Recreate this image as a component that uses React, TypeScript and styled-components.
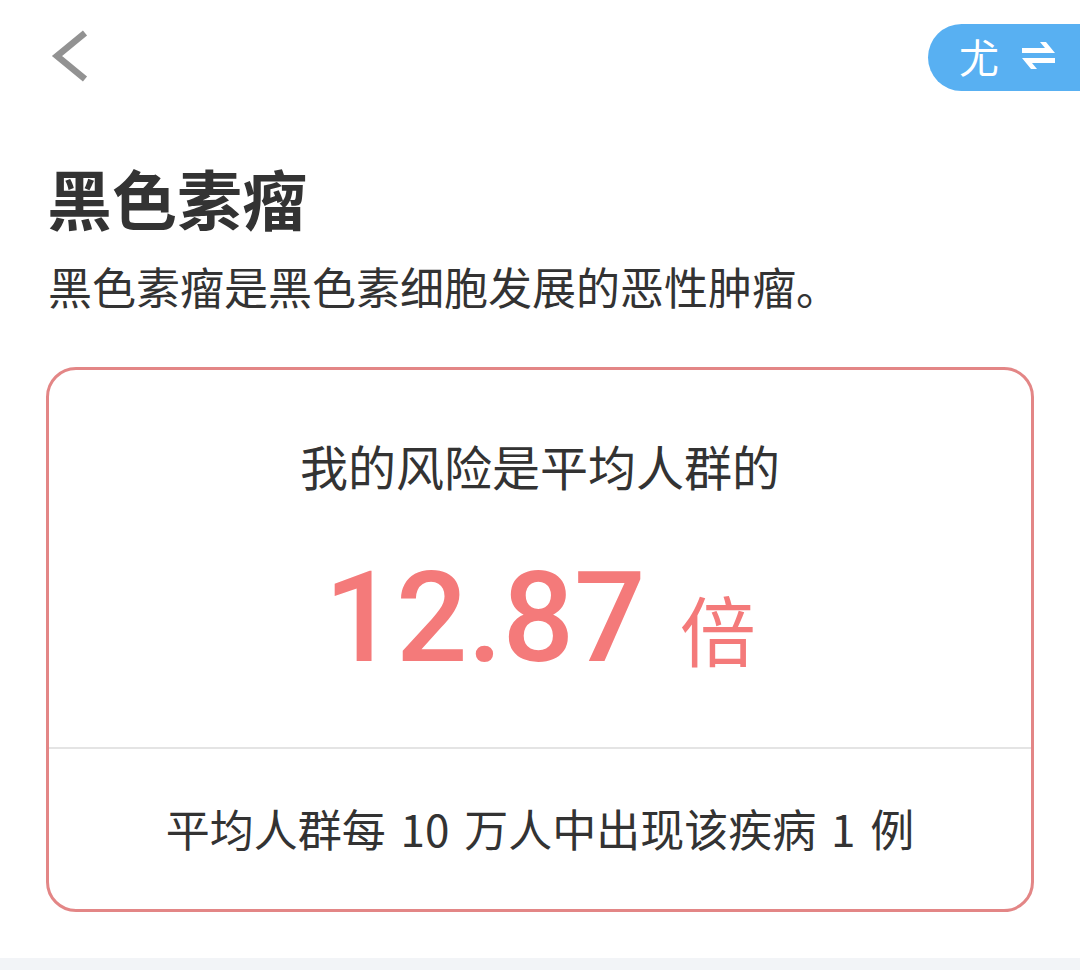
import React from "react";
import styled, { createGlobalStyle } from "styled-components";

const GlobalStyle = createGlobalStyle`
  html, body {
    margin: 0;
    padding: 0;
    background: #ffffff;
  }
  body {
    font-family: "Noto Sans CJK SC", "Noto Sans", sans-serif;
    color: #333333;
  }
  * { box-sizing: border-box; }
`;

const Page = styled.div`
  width: 1080px;
  height: 970px;
  display: flex;
  flex-direction: column;
  background: #ffffff;
  overflow: hidden;
`;

const TopBar = styled.div`
  height: 165px;
  display: flex;
  justify-content: space-between;
  align-items: flex-start;
`;

const BackButton = styled.button`
  margin: 28px 0 0 50px;
  padding: 0;
  border: none;
  background: transparent;
  width: 40px;
  height: 56px;
  display: flex;
  cursor: pointer;
`;

const SwitchPill = styled.div`
  margin-top: 24px;
  width: 152px;
  height: 67px;
  border-radius: 34px 0 0 34px;
  background: #58b0f2;
  display: flex;
  align-items: center;
  padding-left: 31px;
  gap: 21px;
`;

const PillText = styled.span`
  font-family: "Noto Sans CJK SC", sans-serif;
  font-size: 40px;
  line-height: 1;
  color: #ffffff;
  padding-bottom: 4px;
`;

const Title = styled.h1`
  margin: 0 0 34px 47px;
  font-size: 65px;
  line-height: 1;
  font-weight: 700;
  color: #333333;
`;

const Subtitle = styled.p`
  margin: 0 0 59px 48px;
  font-size: 44px;
  line-height: 1;
  color: #333333;
`;

const Card = styled.section`
  margin: 0 46px;
  height: 545px;
  border: 3px solid #e38686;
  border-radius: 30px;
  display: flex;
  flex-direction: column;
`;

const CardTop = styled.div`
  padding: 71px 0 64px;
  display: flex;
  flex-direction: column;
  align-items: center;
  gap: 66px;
`;

const CardLabel = styled.div`
  font-size: 48px;
  line-height: 1;
  color: #333333;
`;

const ValueRow = styled.div`
  display: flex;
  align-items: baseline;
  justify-content: center;
  gap: 34px;
  height: 128px;
  color: #f47a7a;
`;

const BigNumber = styled.span`
  font-family: Roboto, "Noto Sans", sans-serif;
  font-weight: 500;
  font-size: 126px;
  line-height: 1;
`;

const Unit = styled.span`
  font-size: 76px;
  line-height: 1;
  font-weight: 400;
`;

const Divider = styled.div`
  height: 2px;
  background: #e4e4e4;
`;

const CardBottom = styled.div`
  flex: 1;
  display: flex;
  justify-content: center;
  padding-top: 57px;
  font-size: 44px;
  line-height: 1;
  word-spacing: 5px;
  white-space: pre;
  color: #333333;
`;

const FooterBand = styled.div`
  margin-top: 46px;
  flex: 1;
  background: #f2f4f7;
`;

const ChevronLeft = () => (
  <svg width="40" height="56" viewBox="0 0 40 56">
    <polyline
      points="35,5 7,28 35,51"
      fill="none"
      stroke="#929292"
      strokeWidth="6.5"
      strokeLinecap="butt"
      strokeLinejoin="miter"
    />
  </svg>
);

const SwapIcon = () => (
  <svg width="36" height="36" viewBox="0 0 36 36">
    <polygon points="2,8 25,8 20,2 26,2 35,13 2,13" fill="#ffffff" />
    <polygon points="2,18 35,18 35,23 12,23 17,29 11,29" fill="#ffffff" />
  </svg>
);

export default function App() {
  return (
    <>
      <GlobalStyle />
      <Page>
        <TopBar>
          <BackButton aria-label="返回">
            <ChevronLeft />
          </BackButton>
          <SwitchPill>
            <PillText>尤</PillText>
            <SwapIcon />
          </SwitchPill>
        </TopBar>
        <Title>黑色素瘤</Title>
        <Subtitle>黑色素瘤是黑色素细胞发展的恶性肿瘤。</Subtitle>
        <Card>
          <CardTop>
            <CardLabel>我的风险是平均人群的</CardLabel>
            <ValueRow>
              <BigNumber>12.87</BigNumber>
              <Unit>倍</Unit>
            </ValueRow>
          </CardTop>
          <Divider />
          <CardBottom>平均人群每 10 万人中出现该疾病 1 例</CardBottom>
        </Card>
        <FooterBand />
      </Page>
    </>
  );
}
